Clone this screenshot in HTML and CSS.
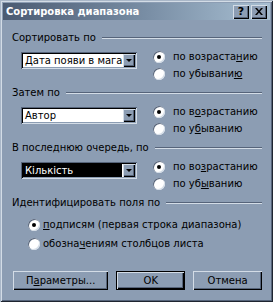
FILE: index.html
```html
<!DOCTYPE html>
<html lang="ru">
<head>
<meta charset="utf-8">
<title>Сортировка диапазона</title>
<link rel="stylesheet" href="styles.css">
</head>
<body>
<div class="window">
  <div class="titlebar">
    <span class="title">Сортировка диапазона</span>
    <div class="tb-buttons">
      <span class="tb-btn">?</span>
      <span class="tb-btn tb-close">
        <svg width="8" height="7" viewBox="0 0 8 7"><path d="M0 0h2l2 2.5L6 0h2L5 3.5 8 7H6L4 4.5 2 7H0l3-3.5z" fill="#000"/></svg>
      </span>
    </div>
  </div>
  <div class="content">
    <div class="group">
      <div class="group-head"><span>Сортировать по</span><i class="etch"></i></div>
      <div class="group-body">
        <div class="combo"><span class="combo-text">Дата появи в магазині</span><span class="combo-btn"><b class="arrow"></b></span></div>
        <div class="radios">
          <label class="radio"><span class="dot checked"></span>по возраста<u>н</u>ию</label>
          <label class="radio"><span class="dot"></span>по убывани<u>ю</u></label>
        </div>
      </div>
    </div>
    <div class="group">
      <div class="group-head"><span>Затем по</span><i class="etch"></i></div>
      <div class="group-body">
        <div class="combo"><span class="combo-text">Автор</span><span class="combo-btn"><b class="arrow"></b></span></div>
        <div class="radios">
          <label class="radio"><span class="dot checked"></span>по в<u>о</u>зрастанию</label>
          <label class="radio"><span class="dot"></span>по у<u>б</u>ыванию</label>
        </div>
      </div>
    </div>
    <div class="group">
      <div class="group-head"><span>В последнюю очередь, по</span><i class="etch"></i></div>
      <div class="group-body">
        <div class="combo"><span class="combo-text selected">Кількість</span><span class="combo-btn"><b class="arrow"></b></span></div>
        <div class="radios">
          <label class="radio"><span class="dot checked"></span>по во<u>з</u>растанию</label>
          <label class="radio"><span class="dot"></span>по уб<u>ы</u>ванию</label>
        </div>
      </div>
    </div>
    <div class="group group-last">
      <div class="group-head"><span>Идентифицировать поля по</span><i class="etch"></i></div>
      <div class="radios-wide">
        <label class="radio"><span class="dot checked"></span><u>п</u>одписям (первая строка диапазона)</label>
        <label class="radio"><span class="dot"></span>обозна<u>ч</u>ениям столбцов листа</label>
      </div>
    </div>
    <div class="buttons">
      <span class="btn btn-params">П<u>а</u>раметры...</span>
      <span class="btn btn-default">OK</span>
      <span class="btn">Отмена</span>
    </div>
  </div>
</div>
</body>
</html>
```
FILE: styles.css
```css
html, body {
  margin: 0;
  padding: 0;
  background: #8c9db3;
}
body {
  font-family: "DejaVu Sans", Verdana, sans-serif;
  font-size: 10px;
  color: #000;
}
.window {
  width: 273px;
  height: 302px;
  box-sizing: border-box;
  padding: 3px;
  background: #8c9db3;
  box-shadow: inset 1px 1px 0 #a9b7c8, inset -1px -1px 0 #1e2530,
              inset 2px 2px 0 #d3dce6, inset -2px -2px 0 #56647a;
}
.titlebar {
  height: 17px;
  display: flex;
  align-items: center;
  justify-content: space-between;
  padding: 0 3px 0 3px;
  background: linear-gradient(to right, #4b5b72 0%, #7a8fa6 55%, #a8bfd2 100%);
}
.title {
  color: #fff;
  font-weight: bold;
  font-size: 10px;
}
.tb-buttons {
  display: flex;
  gap: 2px;
}
.tb-btn {
  width: 16px;
  height: 14px;
  box-sizing: border-box;
  background: #8c9db3;
  box-shadow: inset 1px 1px 0 #d3dce6, inset -1px -1px 0 #000, inset -2px -2px 0 #56647a;
  display: flex;
  align-items: center;
  justify-content: center;
  font-weight: bold;
  font-size: 11px;
  line-height: 14px;
}
.content {
  padding: 11px 8px 0 9px;
}
.group {
  margin-bottom: 4px;
}
.group-head {
  height: 13px;
  line-height: 13px;
  display: flex;
  align-items: center;
}
.etch {
  flex: 1;
  height: 0;
  margin-left: 6px;
  border-top: 1px solid #56647a;
  border-bottom: 1px solid #d3dce6;
}
.group-body {
  display: flex;
  margin-top: 4px;
}
.combo {
  flex: none;
  margin-top: 4px;
  margin-left: 9px;
  width: 116px;
  height: 17px;
  box-sizing: border-box;
  padding: 2px;
  background: #fff;
  box-shadow: inset 1px 1px 0 #56647a, inset -1px -1px 0 #d3dce6,
              inset 2px 2px 0 #000, inset -2px -2px 0 #8c9db3;
  display: flex;
}
.combo-text {
  flex: 1;
  overflow: hidden;
  white-space: nowrap;
  line-height: 13px;
  padding-left: 2px;
}
.combo-text.selected {
  background: #000;
  color: #fff;
  margin: 0 1px 0 0;
}
.combo-btn {
  width: 12px;
  height: 13px;
  box-sizing: border-box;
  background: #8c9db3;
  box-shadow: inset 1px 1px 0 #d3dce6, inset -1px -1px 0 #000, inset -2px -2px 0 #56647a;
  display: flex;
  align-items: center;
  justify-content: center;
}
.arrow {
  width: 0;
  height: 0;
  border-left: 3px solid transparent;
  border-right: 3px solid transparent;
  border-top: 3px solid #000;
  margin-left: -1px;
}
.radios {
  margin-left: 16px;
  display: flex;
  flex-direction: column;
}
.radio {
  height: 17px;
  display: flex;
  align-items: center;
  white-space: nowrap;
}
.dot {
  width: 12px;
  height: 12px;
  flex: none;
  box-sizing: border-box;
  border-radius: 50%;
  background: #fff;
  margin-right: 8px;
  box-shadow: inset 1px 1px 0 #56647a, inset -1px -1px 0 #d3dce6;
  display: flex;
  align-items: center;
  justify-content: center;
}
.dot.checked::after {
  content: "";
  width: 4px;
  height: 4px;
  border-radius: 50%;
  background: #000;
}
u {
  text-decoration: underline;
  text-underline-offset: 1px;
}
.radios-wide {
  margin-top: 6px;
  margin-left: 16px;
  display: flex;
  flex-direction: column;
}
.radios-wide .radio {
  height: 19px;
}
.radios-wide .dot {
  margin-right: 3px;
}
.buttons {
  display: flex;
  margin-top: 18px;
  margin-left: 1px;
  gap: 8px;
}
.btn {
  width: 70px;
  height: 19px;
  box-sizing: border-box;
  display: flex;
  align-items: center;
  justify-content: center;
  background: #8c9db3;
  box-shadow: inset 1px 1px 0 #d3dce6, inset -1px -1px 0 #000, inset -2px -2px 0 #56647a;
}
.btn-params {
  width: 97px;
}
.btn-default {
  box-shadow: inset 0 0 0 1px #000, inset 2px 2px 0 #d3dce6, inset -2px -2px 0 #000, inset -3px -3px 0 #56647a;
}
```
